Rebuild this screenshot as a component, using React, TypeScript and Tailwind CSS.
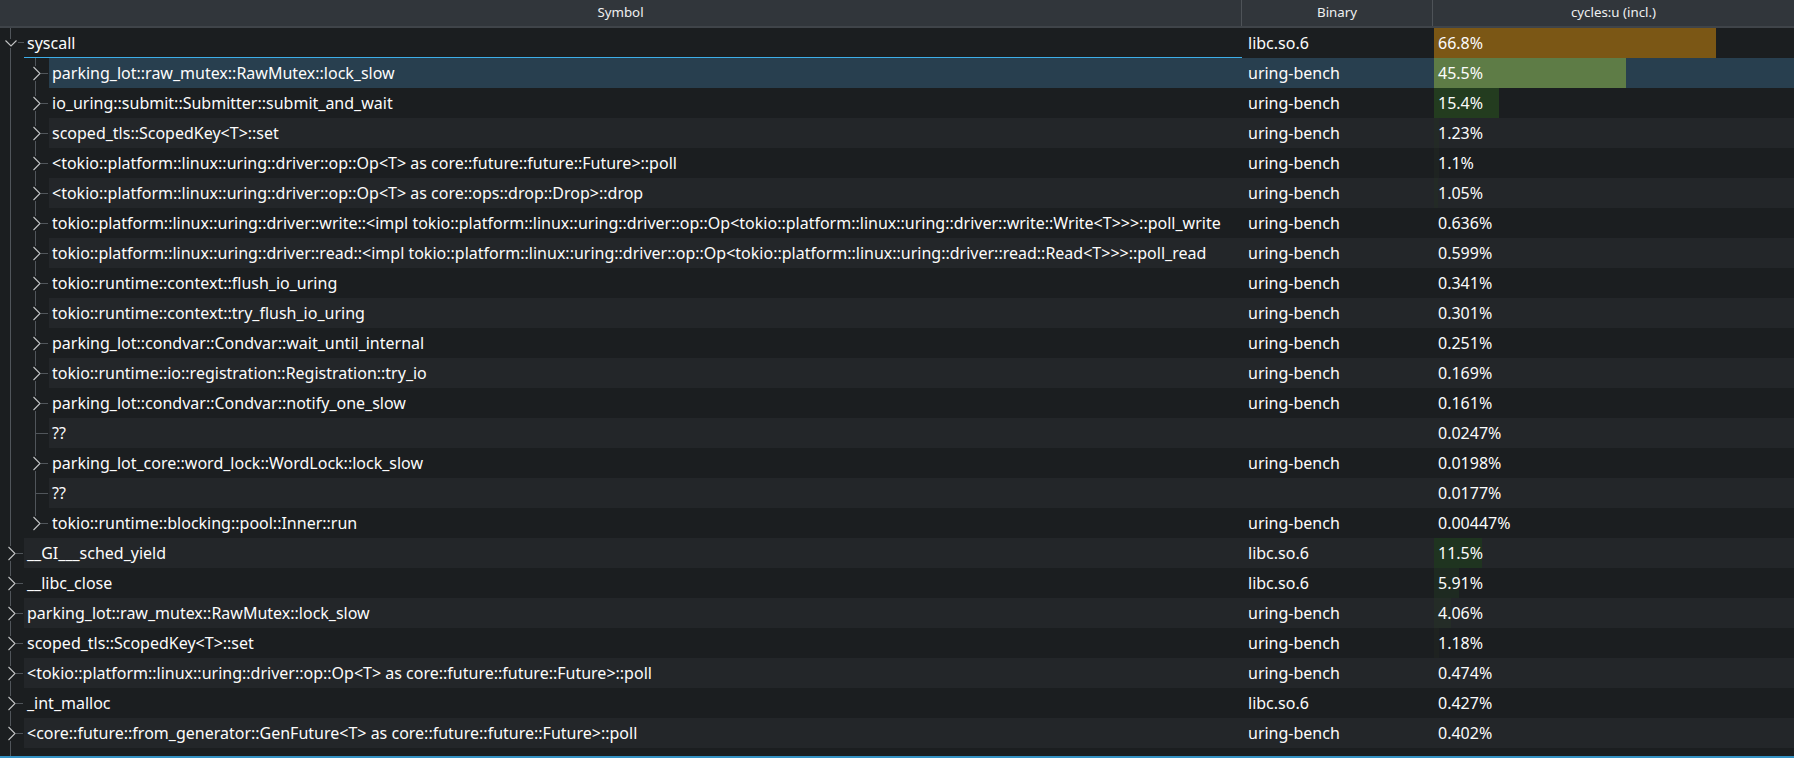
import React from "react";

type Row = {
  level: 0 | 1;
  sym: string;
  bin: string;
  pct: string;
  w?: number;
  color?: string;
  expanded?: boolean;
  selected?: boolean;
  leaf?: boolean;
  last?: boolean;
};

const rows: Row[] = [
  { level: 0, sym: "syscall", bin: "libc.so.6", pct: "66.8%", w: 282, color: "#7b5715", expanded: true },
  { level: 1, sym: "parking_lot::raw_mutex::RawMutex::lock_slow", bin: "uring-bench", pct: "45.5%", w: 192, color: "#5e7c46", selected: true },
  { level: 1, sym: "io_uring::submit::Submitter::submit_and_wait", bin: "uring-bench", pct: "15.4%", w: 65, color: "#233c1f" },
  { level: 1, sym: "scoped_tls::ScopedKey<T>::set", bin: "uring-bench", pct: "1.23%", w: 5, color: "#232a26" },
  { level: 1, sym: "<tokio::platform::linux::uring::driver::op::Op<T> as core::future::future::Future>::poll", bin: "uring-bench", pct: "1.1%", w: 5, color: "#1e2321" },
  { level: 1, sym: "<tokio::platform::linux::uring::driver::op::Op<T> as core::ops::drop::Drop>::drop", bin: "uring-bench", pct: "1.05%", w: 4, color: "#232a26" },
  { level: 1, sym: "tokio::platform::linux::uring::driver::write::<impl tokio::platform::linux::uring::driver::op::Op<tokio::platform::linux::uring::driver::write::Write<T>>>::poll_write", bin: "uring-bench", pct: "0.636%" },
  { level: 1, sym: "tokio::platform::linux::uring::driver::read::<impl tokio::platform::linux::uring::driver::op::Op<tokio::platform::linux::uring::driver::read::Read<T>>>::poll_read", bin: "uring-bench", pct: "0.599%" },
  { level: 1, sym: "tokio::runtime::context::flush_io_uring", bin: "uring-bench", pct: "0.341%" },
  { level: 1, sym: "tokio::runtime::context::try_flush_io_uring", bin: "uring-bench", pct: "0.301%" },
  { level: 1, sym: "parking_lot::condvar::Condvar::wait_until_internal", bin: "uring-bench", pct: "0.251%" },
  { level: 1, sym: "tokio::runtime::io::registration::Registration::try_io", bin: "uring-bench", pct: "0.169%" },
  { level: 1, sym: "parking_lot::condvar::Condvar::notify_one_slow", bin: "uring-bench", pct: "0.161%" },
  { level: 1, sym: "??", bin: "", pct: "0.0247%", leaf: true },
  { level: 1, sym: "parking_lot_core::word_lock::WordLock::lock_slow", bin: "uring-bench", pct: "0.0198%" },
  { level: 1, sym: "??", bin: "", pct: "0.0177%", leaf: true },
  { level: 1, sym: "tokio::runtime::blocking::pool::Inner::run", bin: "uring-bench", pct: "0.00447%", last: true },
  { level: 0, sym: "__GI___sched_yield", bin: "libc.so.6", pct: "11.5%", w: 48, color: "#1f3420" },
  { level: 0, sym: "__libc_close", bin: "libc.so.6", pct: "5.91%", w: 25, color: "#1e2a21" },
  { level: 0, sym: "parking_lot::raw_mutex::RawMutex::lock_slow", bin: "uring-bench", pct: "4.06%", w: 17, color: "#242c27" },
  { level: 0, sym: "scoped_tls::ScopedKey<T>::set", bin: "uring-bench", pct: "1.18%", w: 5, color: "#1e2220" },
  { level: 0, sym: "<tokio::platform::linux::uring::driver::op::Op<T> as core::future::future::Future>::poll", bin: "uring-bench", pct: "0.474%" },
  { level: 0, sym: "_int_malloc", bin: "libc.so.6", pct: "0.427%" },
  { level: 0, sym: "<core::future::from_generator::GenFuture<T> as core::future::future::Future>::poll", bin: "uring-bench", pct: "0.402%" },
];

const LINE = "#50555a";
const CHEV = "#c3c5c6";

function Branch({ row }: { row: Row }) {
  const w = row.level === 0 ? 24 : 49;
  return (
    <svg width={w} height={30} className="shrink-0 block" shapeRendering="crispEdges">
      {row.level === 0 && row.expanded && (
        <>
          <line x1={10.5} y1={0} x2={10.5} y2={11} stroke={LINE} />
          <line x1={10.5} y1={20} x2={10.5} y2={30} stroke={LINE} />
          <polyline points="5.5,12.5 11,18 16.5,12.5" fill="none" stroke={CHEV} strokeWidth={1.1} shapeRendering="auto" />
          <line x1={18} y1={14.5} x2={24} y2={14.5} stroke={LINE} />
        </>
      )}
      {row.level === 0 && !row.expanded && (
        <>
          <line x1={10.5} y1={0} x2={10.5} y2={8} stroke={LINE} />
          <line x1={10.5} y1={23} x2={10.5} y2={30} stroke={LINE} />
          <polyline points="8.5,9 15,15.5 8.5,22" fill="none" stroke={CHEV} strokeWidth={1.1} shapeRendering="auto" />
          <line x1={16} y1={15.5} x2={23} y2={15.5} stroke={LINE} />
        </>
      )}
      {row.level === 1 && (
        <>
          <line x1={10.5} y1={0} x2={10.5} y2={30} stroke={LINE} />
          {row.leaf ? (
            <>
              <line x1={35.5} y1={0} x2={35.5} y2={30} stroke={LINE} />
              <line x1={35} y1={15.5} x2={48} y2={15.5} stroke={LINE} />
            </>
          ) : (
            <>
              <line x1={35.5} y1={0} x2={35.5} y2={8} stroke={LINE} />
              {!row.last && <line x1={35.5} y1={23} x2={35.5} y2={30} stroke={LINE} />}
              <polyline points="33.5,9 40,15.5 33.5,22" fill="none" stroke={CHEV} strokeWidth={1.1} shapeRendering="auto" />
              <line x1={41} y1={15.5} x2={48} y2={15.5} stroke={LINE} />
            </>
          )}
        </>
      )}
    </svg>
  );
}

function TreeRow({ row, index }: { row: Row; index: number }) {
  const odd = index % 2 === 1;
  const bg = row.selected ? "bg-[#283f4f]" : odd ? "bg-[#232629]" : "bg-[#1b1e20]";
  const symW = row.level === 0 ? "w-[1218px]" : "w-[1193px]";
  return (
    <div className="flex h-[30px] shrink-0">
      <Branch row={row} />
      <div className={`flex flex-1 h-full ${bg}`}>
        <div
          className={`${symW} shrink-0 h-full overflow-hidden whitespace-nowrap pl-[3px] leading-[30px] ${
            index === 0 ? "border-b border-[#3daee9]" : ""
          }`}
        >
          {row.sym}
        </div>
        <div className="w-[192px] shrink-0 h-full pl-[6px] leading-[30px] whitespace-nowrap overflow-hidden">
          {row.bin}
        </div>
        <div className="relative flex-1 h-full">
          {row.w ? (
            <div className="absolute left-0 top-0 bottom-0" style={{ width: row.w, backgroundColor: row.color }} />
          ) : null}
          <div className="relative pl-[4px] leading-[30px] whitespace-nowrap">{row.pct}</div>
        </div>
      </div>
    </div>
  );
}

export default function App() {
  return (
    <div
      className="w-[1794px] h-[758px] overflow-hidden flex flex-col bg-[#1b1e20] text-[#fcfcfc] text-[16px]"
      style={{ fontFamily: '"Noto Sans", "Open Sans", sans-serif' }}
    >
      <div className="flex h-[28px] shrink-0 bg-[#31363b] border-b-2 border-[#3f4449] text-[13.3px] text-[#eff0f1]">
        <div className="w-[1242px] shrink-0 flex items-center justify-center border-r border-[#4e5358]">Symbol</div>
        <div className="w-[191px] shrink-0 flex items-center justify-center border-r border-[#4e5358]">Binary</div>
        <div className="flex-1 flex items-center justify-center">cycles:u (incl.)</div>
      </div>
      {rows.map((r, i) => (
        <TreeRow key={i} row={r} index={i} />
      ))}
      <div className="flex-1 flex">
        <svg width={24} height={8} className="block" shapeRendering="crispEdges">
          <line x1={10.5} y1={0} x2={10.5} y2={8} stroke={LINE} />
        </svg>
      </div>
      <div className="h-[2px] shrink-0 bg-[#3592c4]" />
    </div>
  );
}
